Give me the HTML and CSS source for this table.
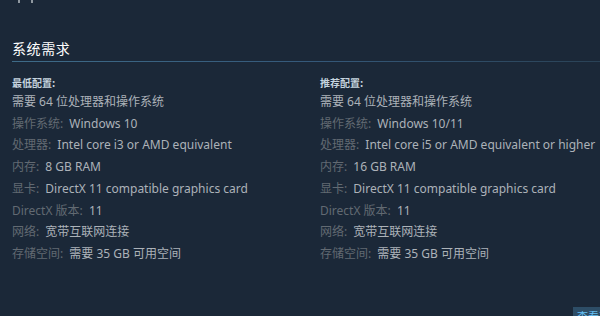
FILE: index.html
```html
<!DOCTYPE html>
<html lang="zh">
<head>
<meta charset="utf-8">
<link rel="stylesheet" href="styles.css">
</head>
<body>
<div class="page">
  <div class="cut"><span class="tick"></span><span class="tick"></span></div>
  <h2 class="section-title">系统需求</h2>
  <div class="sysreq">
    <div class="col">
      <div class="col-title">最低配置:</div>
      <ul class="reqs">
        <li>需要 64 位处理器和操作系统</li>
        <li><span class="lbl">操作系统:</span> Windows 10</li>
        <li><span class="lbl">处理器:</span> Intel core i3 or AMD equivalent</li>
        <li><span class="lbl">内存:</span> 8 GB RAM</li>
        <li><span class="lbl">显卡:</span> DirectX 11 compatible graphics card</li>
        <li><span class="lbl">DirectX 版本:</span> 11</li>
        <li><span class="lbl">网络:</span> 宽带互联网连接</li>
        <li><span class="lbl">存储空间:</span> 需要 35 GB 可用空间</li>
      </ul>
    </div>
    <div class="col">
      <div class="col-title">推荐配置:</div>
      <ul class="reqs">
        <li>需要 64 位处理器和操作系统</li>
        <li><span class="lbl">操作系统:</span> Windows 10/11</li>
        <li><span class="lbl">处理器:</span> Intel core i5 or AMD equivalent or higher</li>
        <li><span class="lbl">内存:</span> 16 GB RAM</li>
        <li><span class="lbl">显卡:</span> DirectX 11 compatible graphics card</li>
        <li><span class="lbl">DirectX 版本:</span> 11</li>
        <li><span class="lbl">网络:</span> 宽带互联网连接</li>
        <li><span class="lbl">存储空间:</span> 需要 35 GB 可用空间</li>
      </ul>
    </div>
  </div>
</div>
<div class="float-btn">查看更多</div>
</body>
</html>
```
FILE: styles.css
```css
html, body {
  margin: 0;
  padding: 0;
  background: #1b2838;
  width: 600px;
  height: 316px;
  overflow: hidden;
}
body {
  font-family: "Noto Sans", "Noto Sans CJK SC", sans-serif;
  color: #acb2b8;
  position: relative;
}
.page {
  padding: 0 0 0 12px;
}
.cut {
  height: 3px;
  display: flex;
  gap: 11px;
  padding-left: 6px;
}
.tick {
  width: 2px;
  height: 3px;
  background: #8f98a0;
}
.section-title {
  margin: 35px 0 0;
  font-family: "Noto Sans CJK SC", sans-serif;
  font-size: 14px;
  font-weight: normal;
  letter-spacing: 0.6px;
  color: #ffffff;
  line-height: 20px;
  padding-bottom: 3px;
  border-bottom: 1px solid transparent;
  border-image: linear-gradient(to right, #3e6b88 0%, #35597a 50%, #2a4256 100%) 1;
}
.sysreq {
  display: grid;
  grid-template-columns: 308px 1fr;
  margin-top: 13px;
}
.col-title {
  font-family: "Noto Sans CJK SC", sans-serif;
  font-size: 10px;
  font-weight: bold;
  color: #c6d4df;
  line-height: 16px;
}
.reqs {
  list-style: none;
  margin: 0;
  padding: 0;
  font-size: 12px;
  line-height: 21.7px;
  white-space: nowrap;
}
.reqs li {
  margin: 0;
}
.lbl {
  color: #626a72;
  margin-right: 3px;
}
.float-btn {
  position: absolute;
  left: 573px;
  top: 307px;
  height: 16px;
  padding: 3px 4px 0;
  background: #2d4d66;
  color: #66c0f4;
  font-family: "Noto Sans CJK SC", sans-serif;
  font-size: 11px;
  line-height: 13px;
  white-space: nowrap;
}
```
